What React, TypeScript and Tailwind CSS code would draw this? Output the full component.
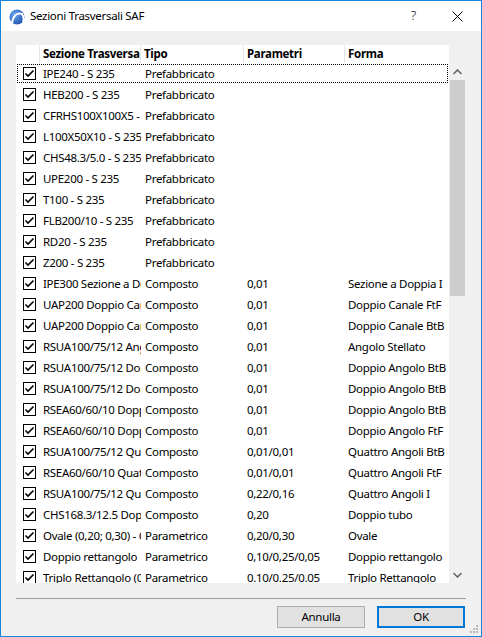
import React from 'react';

type Row = [string, string, string, string];

const rows: Row[] = [
  ['IPE240 - S 235', 'Prefabbricato', '', ''],
  ['HEB200 - S 235', 'Prefabbricato', '', ''],
  ['CFRHS100X100X5 - S 235', 'Prefabbricato', '', ''],
  ['L100X50X10 - S 235', 'Prefabbricato', '', ''],
  ['CHS48.3/5.0 - S 235', 'Prefabbricato', '', ''],
  ['UPE200 - S 235', 'Prefabbricato', '', ''],
  ['T100 - S 235', 'Prefabbricato', '', ''],
  ['FLB200/10 - S 235', 'Prefabbricato', '', ''],
  ['RD20 - S 235', 'Prefabbricato', '', ''],
  ['Z200 - S 235', 'Prefabbricato', '', ''],
  ['IPE300 Sezione a Doppia I', 'Composto', '0,01', 'Sezione a Doppia I'],
  ['UAP200 Doppio Canale FtF', 'Composto', '0,01', 'Doppio Canale FtF'],
  ['UAP200 Doppio Canale BtB', 'Composto', '0,01', 'Doppio Canale BtB'],
  ['RSUA100/75/12 Angolo Stellato', 'Composto', '0,01', 'Angolo Stellato'],
  ['RSUA100/75/12 Doppio Angolo BtB', 'Composto', '0,01', 'Doppio Angolo BtB'],
  ['RSUA100/75/12 Doppio Angolo BtB', 'Composto', '0,01', 'Doppio Angolo BtB'],
  ['RSEA60/60/10 Doppio Angolo BtB', 'Composto', '0,01', 'Doppio Angolo BtB'],
  ['RSEA60/60/10 Doppio Angolo FtF', 'Composto', '0,01', 'Doppio Angolo FtF'],
  ['RSUA100/75/12 Quattro Angoli BtB', 'Composto', '0,01/0,01', 'Quattro Angoli BtB'],
  ['RSEA60/60/10 Quattro Angoli FtF', 'Composto', '0,01/0,01', 'Quattro Angoli FtF'],
  ['RSUA100/75/12 Quattro Angoli I', 'Composto', '0,22/0,16', 'Quattro Angoli I'],
  ['CHS168.3/12.5 Doppio tubo', 'Composto', '0,20', 'Doppio tubo'],
  ['Ovale (0,20; 0,30) - Ovale', 'Parametrico', '0,20/0,30', 'Ovale'],
  ['Doppio rettangolo', 'Parametrico', '0,10/0,25/0,05', 'Doppio rettangolo'],
  ['Triplo Rettangolo (0,10; 0,25)', 'Parametrico', '0.10/0.25/0.05', 'Triplo Rettangolo'],
];

function Check() {
  return (
    <span className="w-[13px] h-[13px] border border-black bg-white flex items-center justify-center">
      <svg width="11" height="11" viewBox="0 0 11 11">
        <path d="M1.5 5.5 L4 8 L9.5 2.5" stroke="#000" strokeWidth="1.6" fill="none" />
      </svg>
    </span>
  );
}

function AppIcon() {
  return (
    <svg width="16" height="16" viewBox="0 0 16 16">
      <defs>
        <radialGradient id="g" cx="0.35" cy="0.35" r="0.75">
          <stop offset="0" stopColor="#6aa6f0" />
          <stop offset="1" stopColor="#1d4fae" />
        </radialGradient>
      </defs>
      <circle cx="8" cy="8" r="7.5" fill="url(#g)" />
      <path d="M3 14 C4 7 8 3 13 5 C14.5 7 15 10 14 13" stroke="#fff" strokeWidth="2" fill="none" />
    </svg>
  );
}

export default function App() {
  return (
    <div className="relative w-[482px] h-[637px] bg-[#f0f0f0] border border-[#1883d7] flex flex-col font-['Noto_Sans',sans-serif] text-[11.5px] tracking-[-0.3px] text-black">
      <div className="h-[30px] shrink-0 bg-white flex items-center">
        <div className="ml-[8px] mt-[1px]">
          <AppIcon />
        </div>
        <span className="ml-[5px]">Sezioni Trasversali SAF</span>
        <span className="ml-auto mr-[36px] text-[13px] font-light">?</span>
        <svg width="11" height="11" viewBox="0 0 11 11" className="mr-[18px]">
          <path d="M0.5 0.5 L10.5 10.5 M10.5 0.5 L0.5 10.5" stroke="#000" strokeWidth="1" />
        </svg>
      </div>

      <div className="flex flex-col px-[15px] pt-[14px]">
        <div className="flex h-[538px] w-[450px]">
          <div className="w-[433px] bg-white flex flex-col overflow-hidden">
            <div className="h-[18px] shrink-0 flex font-bold leading-[18px]">
              <div className="w-[24px] border-r border-[#e5e5e5]" />
              <div className="w-[101px] pl-[3px] border-r border-[#e5e5e5] overflow-hidden whitespace-nowrap">Sezione Trasversale</div>
              <div className="w-[103px] pl-[3px] border-r border-[#e5e5e5]">Tipo</div>
              <div className="w-[101px] pl-[3px] border-r border-[#e5e5e5]">Parametri</div>
              <div className="w-[103px] pl-[3px]">Forma</div>
            </div>
            {rows.map((r, i) => (
              <div
                key={i}
                className={
                  'h-[21px] shrink-0 flex items-center whitespace-nowrap ' +
                  (i === 0 ? 'outline-1 outline-dotted outline-black -outline-offset-2' : '')
                }
              >
                <div className="w-[24px] shrink-0 pl-[7px]">
                  <Check />
                </div>
                <div className="w-[101px] shrink-0 pl-[3px] overflow-hidden">{r[0]}</div>
                <div className="w-[103px] shrink-0 pl-[4px] overflow-hidden">{r[1]}</div>
                <div className="w-[101px] shrink-0 pl-[3px] overflow-hidden">{r[2]}</div>
                <div className="w-[103px] shrink-0 pl-[3px] overflow-hidden">{r[3]}</div>
              </div>
            ))}
          </div>
          <div className="w-[17px] flex flex-col pt-[18px]">
            <div className="h-[17px] flex items-center justify-center">
              <svg width="9" height="6" viewBox="0 0 9 6">
                <path d="M0.5 5 L4.5 1 L8.5 5" stroke="#606060" strokeWidth="1.5" fill="none" />
              </svg>
            </div>
            <div className="h-[216px] mx-[1px] bg-[#cdcdcd]" />
            <div className="flex-1" />
            <div className="h-[17px] flex items-center justify-center">
              <svg width="9" height="6" viewBox="0 0 9 6">
                <path d="M0.5 1 L4.5 5 L8.5 1" stroke="#606060" strokeWidth="1.5" fill="none" />
              </svg>
            </div>
          </div>
        </div>

        <div className="mt-[15px] h-px bg-[#a0a0a0]" />

        <div className="flex justify-end gap-[12px] mt-[7px] mr-[1px]">
          <button className="w-[88px] h-[22px] bg-[#e1e1e1] border border-[#adadad]">Annulla</button>
          <button className="w-[88px] h-[22px] bg-[#e1e1e1] border-2 border-[#0078d7]">OK</button>
        </div>
      </div>

      <svg width="9" height="9" viewBox="0 0 9 9" className="absolute right-[2px] bottom-[2px]">
        <rect x="6" y="0" width="2" height="2" fill="#b8b8b8" />
        <rect x="3" y="3" width="2" height="2" fill="#b8b8b8" />
        <rect x="6" y="3" width="2" height="2" fill="#b8b8b8" />
        <rect x="0" y="6" width="2" height="2" fill="#b8b8b8" />
        <rect x="3" y="6" width="2" height="2" fill="#b8b8b8" />
        <rect x="6" y="6" width="2" height="2" fill="#b8b8b8" />
      </svg>
    </div>
  );
}
